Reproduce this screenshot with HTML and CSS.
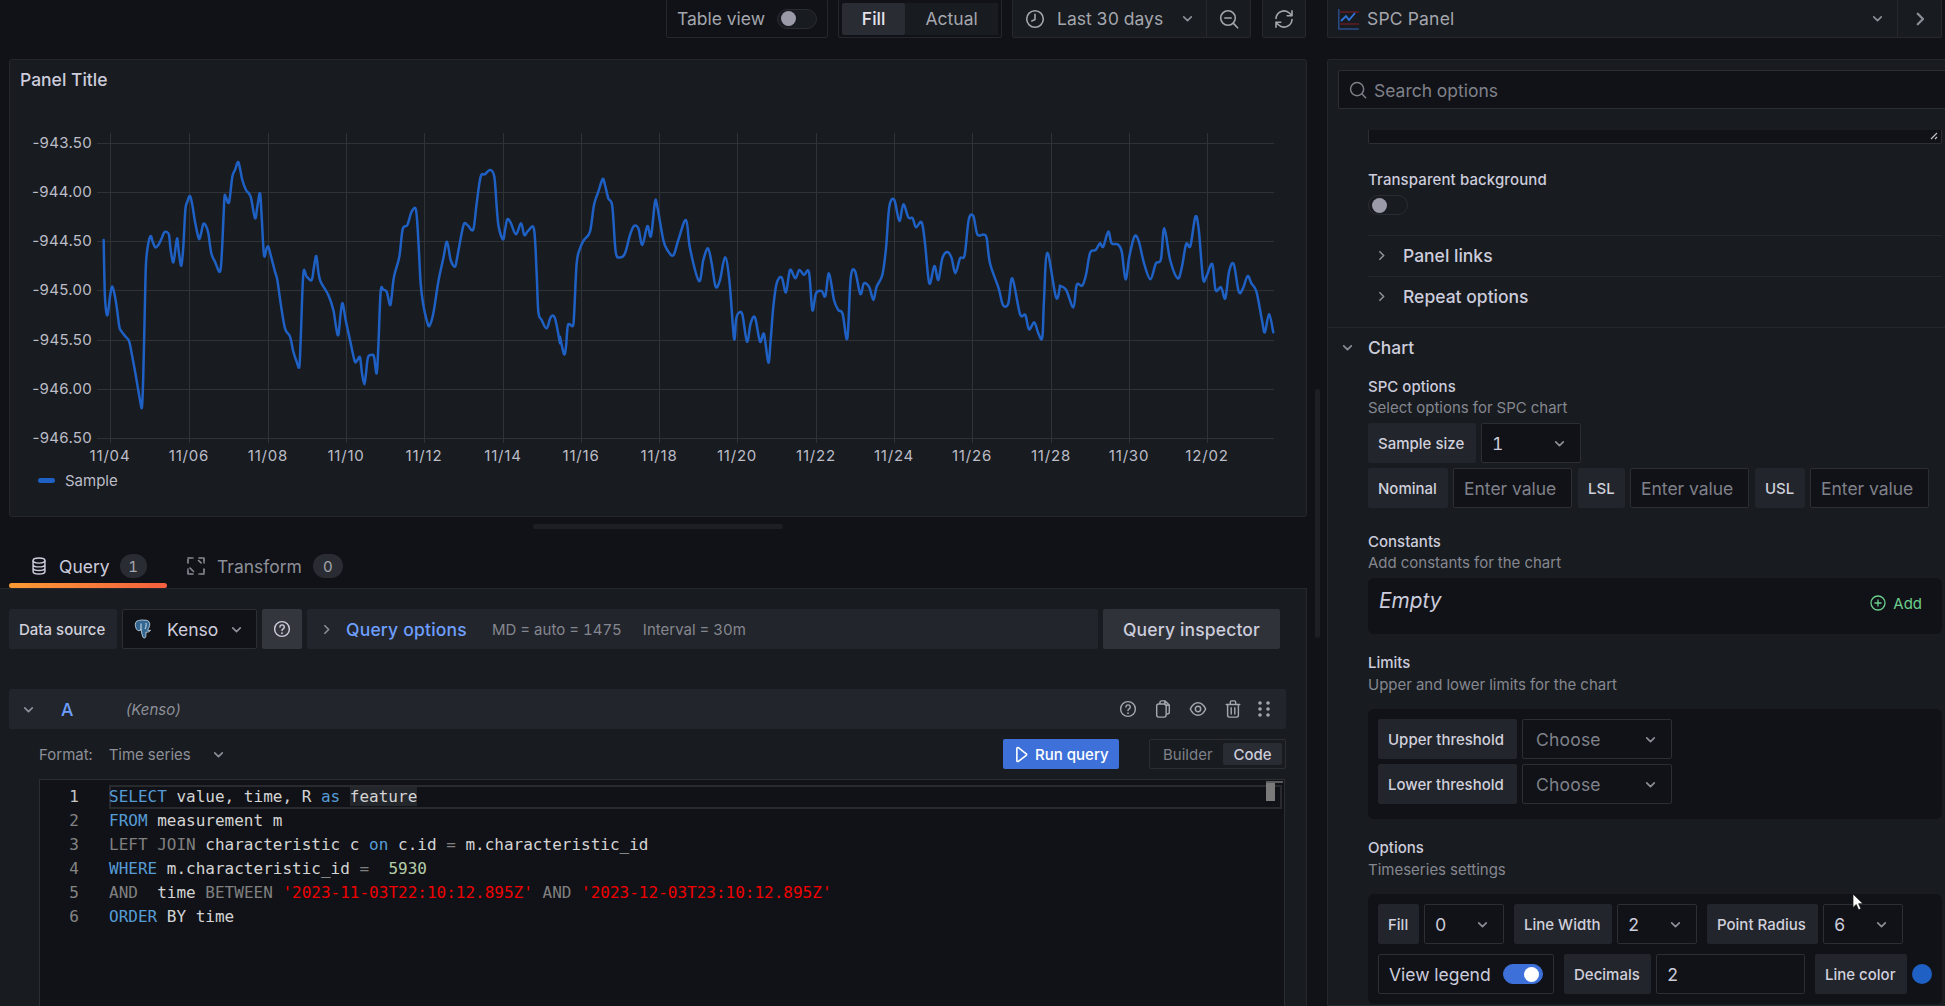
FILE: index.html
```html
<!DOCTYPE html>
<html lang="en">
<head>
<meta charset="utf-8">
<title>Edit panel</title>
<link rel="stylesheet" href="styles.css">
</head>
<body>
<svg class="defs" aria-hidden="true">
  <symbol id="chev-d" viewBox="0 0 12 12"><path d="M2.5 4.5 6 8l3.5-3.5" fill="none" stroke="currentColor" stroke-width="1.5" stroke-linecap="round" stroke-linejoin="round"/></symbol>
  <symbol id="chev-r" viewBox="0 0 12 12"><path d="M4.5 2.5 8 6l-3.5 3.5" fill="none" stroke="currentColor" stroke-width="1.5" stroke-linecap="round" stroke-linejoin="round"/></symbol>
  <symbol id="help" viewBox="0 0 20 20"><circle cx="10" cy="10" r="8.2" fill="none" stroke="currentColor" stroke-width="1.6"/><path d="M7.7 7.8a2.4 2.4 0 1 1 3.6 2.1c-.8.5-1.3 1-1.3 1.9" fill="none" stroke="currentColor" stroke-width="1.6" stroke-linecap="round"/><circle cx="10" cy="14.6" r="1" fill="currentColor"/></symbol>
</svg>

<div class="app">
  <div class="left">
    <div class="toolbar">
      <div class="tbox table-view">
        <span>Table view</span>
        <span class="toggle"><i class="knob"></i></span>
      </div>
      <div class="tbox seg">
        <span class="seg-on">Fill</span>
        <span class="seg-off">Actual</span>
      </div>
      <div class="tbox timebox">
        <div class="time-main">
          <svg class="ic20" viewBox="0 0 20 20"><circle cx="10" cy="10" r="8.3" fill="none" stroke="currentColor" stroke-width="1.6"/><path d="M10 5.2V10.6L6.8 12" fill="none" stroke="currentColor" stroke-width="1.6" stroke-linecap="round" stroke-linejoin="round"/></svg>
          <span class="time-text">Last 30 days</span>
          <svg class="ic12"><use href="#chev-d"/></svg>
        </div>
        <div class="time-zoom">
          <svg class="ic20" viewBox="0 0 20 20"><circle cx="9" cy="9" r="7.3" fill="none" stroke="currentColor" stroke-width="1.6"/><path d="M5.8 9h6.4M14.4 14.4 18.6 18.8" fill="none" stroke="currentColor" stroke-width="1.6" stroke-linecap="round"/></svg>
        </div>
      </div>
      <div class="tbox refresh">
        <svg class="ic20" viewBox="0 0 20 20"><path d="M2 9.5A8 8 0 0 1 15.6 4.3L18 6.6M18 1.8v4.9h-4.8M18 10.5A8 8 0 0 1 4.4 15.7L2 13.4M2 18.2v-4.9h4.8" fill="none" stroke="currentColor" stroke-width="1.6" stroke-linecap="round" stroke-linejoin="round"/></svg>
      </div>
    </div>

    <section class="panel">
      <h2 class="panel-title">Panel Title</h2>
      <svg class="chart" width="1296" height="340" viewBox="10 130 1296 340">
        <g class="grid">
          <path d="M97 143.5H1274M97 192.5H1274M97 241.5H1274M97 290.5H1274M97 340.5H1274M97 389.5H1274M97 438.5H1274"/>
          <path d="M110.5 133V443M189.5 133V443M268.5 133V443M346.5 133V443M424.5 133V443M503.5 133V443M581.5 133V443M659.5 133V443M737.5 133V443M816.5 133V443M894.5 133V443M972.5 133V443M1051.5 133V443M1129.5 133V443M1207.5 133V443"/>
        </g>
        <g class="ylabels">
          <text x="92" y="144">-943.50</text>
          <text x="92" y="193">-944.00</text>
          <text x="92" y="242">-944.50</text>
          <text x="92" y="291">-945.00</text>
          <text x="92" y="341">-945.50</text>
          <text x="92" y="390">-946.00</text>
          <text x="92" y="439">-946.50</text>
        </g>
        <g class="xlabels">
          <text x="110" y="457">11/04</text>
          <text x="189" y="457">11/06</text>
          <text x="268" y="457">11/08</text>
          <text x="346" y="457">11/10</text>
          <text x="424" y="457">11/12</text>
          <text x="503" y="457">11/14</text>
          <text x="581" y="457">11/16</text>
          <text x="659" y="457">11/18</text>
          <text x="737" y="457">11/20</text>
          <text x="816" y="457">11/22</text>
          <text x="894" y="457">11/24</text>
          <text x="972" y="457">11/26</text>
          <text x="1051" y="457">11/28</text>
          <text x="1129" y="457">11/30</text>
          <text x="1207" y="457">12/02</text>
        </g>
        <polyline class="series" transform="translate(60 140) scale(.33333)" points="131,300 134,450 138,510 143,524 150,470 156,440 163,460 170,500 178,560 185,575 195,588 207,603 215,640 228,710 240,780 246,800 250,700 255,480 258,370 264,315 272,288 278,305 286,322 295,315 305,295 312,278 320,276 327,285 332,330 339,367 344,345 351,295 357,340 364,377 370,320 376,210 382,185 390,168 397,195 405,245 416,295 422,285 430,252 438,258 445,280 454,340 465,365 480,395 486,330 493,180 497,170 507,187 517,110 525,90 534,66 540,85 547,120 558,150 572,170 585,235 592,200 600,160 605,230 612,345 620,325 625,320 632,345 645,395 652,420 662,490 675,565 690,590 700,635 710,665 718,680 722,600 730,402 740,410 755,420 762,380 769,348 775,395 782,425 805,465 820,510 828,560 835,585 842,520 848,490 857,540 870,600 884,663 892,660 900,652 906,700 913,733 918,700 924,652 935,645 942,650 950,700 955,620 962,455 970,450 980,455 990,495 995,470 1002,410 1018,350 1028,268 1042,255 1055,215 1068,210 1075,300 1082,430 1090,495 1100,540 1108,558 1120,520 1135,425 1150,355 1161,305 1172,360 1185,380 1192,350 1205,280 1213,250 1225,258 1240,268 1250,190 1262,110 1275,103 1290,90 1303,110 1310,200 1316,260 1329,298 1335,270 1342,238 1352,248 1368,283 1383,250 1393,285 1405,272 1422,268 1430,400 1435,515 1445,540 1460,565 1472,532 1485,535 1500,610"/>
        <polyline class="series" transform="translate(560 140) scale(.33333)" points="0,590 12,642 18,620 24,555 38,558 42,530 50,370 60,325 72,300 90,275 102,195 115,155 128,117 135,135 145,175 157,200 167,335 180,352 195,340 210,285 222,258 235,265 247,315 262,258 273,288 285,186 292,200 310,300 322,330 340,346 355,300 378,240 390,325 417,423 430,360 444,325 455,370 467,440 480,420 495,352 508,420 522,595 528,540 535,520 547,523 561,605 572,550 585,532 600,605 612,582 625,668 632,600 640,500 650,430 665,412 678,457 690,390 706,415 718,390 732,405 747,397 757,510 768,460 785,453 796,468 807,400 822,480 835,510 848,522 862,595 872,415 885,393 901,462 912,430 928,442 940,480 950,440 967,405 978,325 988,200 1003,180 1018,243 1030,193 1045,232 1058,235 1068,262 1085,247 1095,310 1108,430 1123,378 1135,420 1147,355 1162,336 1175,355 1186,400 1200,355 1214,345 1226,240 1240,228 1252,283 1270,284 1280,295 1290,370 1316,445 1329,495 1345,490 1357,415 1380,522 1396,525 1407,568 1423,547 1435,580 1447,592 1452,480 1462,338 1488,472 1500,440"/>
        <polyline class="series" transform="translate(660 0) scale(.42092 .33333)" points="950,857 965,870 982,922 990,855 1003,857 1012,825 1022,758 1035,750 1045,730 1053,740 1065,695 1073,730 1087,733 1097,755 1106,838 1115,770 1127,710 1137,722 1150,790 1165,838 1178,790 1190,778 1198,685 1212,780 1230,835 1240,800 1250,732 1260,738 1272,650 1280,690 1290,835 1298,830 1312,792 1320,870 1333,862 1343,895 1352,815 1363,792 1375,875 1385,865 1396,828 1405,850 1417,875 1430,960 1437,997 1447,942 1457,997"/>
      </svg>
      <div class="legend"><i class="legend-line"></i><span>Sample</span></div>
    </section>

    <div class="splitter"></div>

    <nav class="tabs">
      <div class="tab tab-active">
        <svg class="ic18" viewBox="0 0 16 20"><ellipse cx="8" cy="4" rx="6.6" ry="2.8" fill="none" stroke="currentColor" stroke-width="1.6"/><path d="M1.4 4v12c0 1.6 3 2.8 6.6 2.8s6.600-1.200 6.600-2.800V4M1.400 8.200c0 1.600 3 2.800 6.600 2.800s6.600-1.200 6.600-2.800M1.400 12.200c0 1.600 3 2.800 6.600 2.800s6.600-1.200 6.600-2.800" fill="none" stroke="currentColor" stroke-width="1.6"/></svg>
        <span>Query</span><b class="badge">1</b>
      </div>
      <div class="tab tab-idle">
        <svg class="ic18" viewBox="0 0 18 18"><path d="M1 6V1h5M17 12v5h-5M12 1h5v5M6 17H1v-5M11.500 3.500l3.500 3M3 11l3.500 3.500" fill="none" stroke="currentColor" stroke-width="1.6" stroke-linecap="round" stroke-linejoin="round" stroke-dasharray="3.500 1.400"/></svg>
        <span>Transform</span><b class="badge badge-wide">0</b>
      </div>
    </nav>

    <section class="query">
      <div class="ds-row">
        <span class="flabel ds-label">Data source</span>
        <div class="select ds-select">
          <svg class="elephant" viewBox="0 0 20 20"><path d="M4.500 1.500C1.800 1.800.8 4.600 1.500 7.500c.5 2.300 1.600 4.200 3.200 4.200 1 0 1.700-.6 2.300-1.300.4 2.500.9 5 1.800 7.500.6 1.500 2.600 1.500 2.900-.2.300-1.500.2-3 .3-4.500 1.800.2 3.800-.6 4.600-1.900-1.200.4-2.300.3-3-.2 1.300-1.800 2.300-4.200 2.100-6.500C15.400 1.600 12.600.8 10 1.200 8.200.6 6.200 1.300 4.500 1.500Z" fill="#336791" stroke="#cfe0ee" stroke-width=".8"/><path d="M7 4.500v7M12 4c.5 2-.2 4.500-1 6" fill="none" stroke="#e6eef5" stroke-width=".9"/></svg>
          <span class="ds-name">Kenso</span>
          <svg class="ic12"><use href="#chev-d"/></svg>
        </div>
        <div class="ds-help"><svg class="ic18"><use href="#help"/></svg></div>
        <div class="qopts">
          <svg class="ic12"><use href="#chev-r"/></svg>
          <span class="qopts-title">Query options</span>
          <span class="qopts-info">MD = auto = 1475</span>
          <span class="qopts-info">Interval = 30m</span>
        </div>
        <div class="inspector">Query inspector</div>
      </div>

      <div class="qhead">
        <svg class="ic12 qhead-chev"><use href="#chev-d"/></svg>
        <span class="qhead-a">A</span>
        <span class="qhead-ds">(Kenso)</span>
        <div class="qhead-icons">
          <svg class="ic18"><use href="#help"/></svg>
          <svg class="ic18" viewBox="0 0 18 20"><path d="M5.500 4.500V3.200C5.500 2 6.500 1 7.700 1h3.600L16 5.700v7.600c0 1.200-1 2.200-2.200 2.200h-1.300M11 1v3c0 1 .8 1.800 1.800 1.800H16" fill="none" stroke="currentColor" stroke-width="1.600" stroke-linejoin="round"/><rect x="2" y="4.500" width="10.500" height="14.500" rx="2.200" fill="none" stroke="currentColor" stroke-width="1.600"/></svg>
          <svg class="ic18" viewBox="0 0 20 20"><path d="M1.500 10C3.500 5.500 6.500 3 10 3s6.500 2.500 8.500 7c-2 4.500-5 7-8.500 7s-6.500-2.500-8.500-7Z" fill="none" stroke="currentColor" stroke-width="1.700"/><circle cx="10" cy="10" r="3" fill="none" stroke="currentColor" stroke-width="1.700"/></svg>
          <svg class="ic18" viewBox="0 0 18 20"><path d="M1.500 5h15M6 5V2.500C6 1.700 6.700 1 7.500 1h3c.8 0 1.500.7 1.500 1.500V5M3 5v12c0 1.100.9 2 2 2h8c1.100 0 2-.9 2-2V5M7 8.500v7M11 8.500v7" fill="none" stroke="currentColor" stroke-width="1.600" stroke-linecap="round"/></svg>
          <svg class="ic18 drag" viewBox="0 0 14 18" fill="currentColor"><circle cx="3" cy="3" r="1.800"/><circle cx="11" cy="3" r="1.800"/><circle cx="3" cy="9" r="1.800"/><circle cx="11" cy="9" r="1.800"/><circle cx="3" cy="15" r="1.800"/><circle cx="11" cy="15" r="1.800"/></svg>
        </div>
      </div>

      <div class="format-row">
        <span class="fmt-label">Format:</span>
        <span class="fmt-value">Time series</span>
        <svg class="ic12 fmt-chev"><use href="#chev-d"/></svg>
        <div class="run">
          <svg class="run-ic" viewBox="0 0 14 18"><path d="M2 2.500c0-.8.900-1.300 1.600-.8l8.500 6.500c.6.400.6 1.300 0 1.700l-8.500 6.500c-.7.500-1.600 0-1.600-.8Z" fill="none" stroke="currentColor" stroke-width="1.700" stroke-linejoin="round"/></svg>
          <span>Run query</span>
        </div>
        <div class="mode">
          <span class="mode-off">Builder</span>
          <span class="mode-on">Code</span>
        </div>
      </div>

      <div class="editor">
        <div class="mm-top"></div>
        <div class="mm-mark"></div>
        <div class="ln ln-cur"><span class="no">1</span><code class="cd"><span class="k">SELECT</span> value, time, R <span class="k">as</span> <span class="sel">feature</span></code></div>
        <div class="ln"><span class="no">2</span><code class="cd"><span class="k">FROM</span> measurement m</code></div>
        <div class="ln"><span class="no">3</span><code class="cd"><span class="g">LEFT JOIN</span> characteristic c <span class="k">on</span> c.id <span class="g">=</span> m.characteristic_id</code></div>
        <div class="ln"><span class="no">4</span><code class="cd"><span class="k">WHERE</span> m.characteristic_id <span class="g">=</span>  <span class="n">5930</span></code></div>
        <div class="ln"><span class="no">5</span><code class="cd"><span class="g">AND</span>  time <span class="g">BETWEEN</span> <span class="s">'2023-11-03T22:10:12.895Z'</span> <span class="g">AND</span> <span class="s">'2023-12-03T23:10:12.895Z'</span></code></div>
        <div class="ln"><span class="no">6</span><code class="cd"><span class="k">ORDER</span> BY time</code></div>
      </div>
    </section>
  </div>

  <div class="gutter"><div class="gutter-thumb"></div></div>

  <div class="right">
    <div class="picker">
      <div class="picker-main">
        <svg class="spc-ic" viewBox="0 0 21 22"><path d="M.8 1v20h20" fill="none" stroke="#2a4f8f" stroke-width="1.400"/><path d="M2 4h19M2 16h19" stroke="#8a1f25" stroke-width="1.200"/><path d="M3 13 8 8l3 4 6-7" fill="none" stroke="#2f74dc" stroke-width="1.800"/></svg>
        <span class="picker-name">SPC Panel</span>
        <svg class="ic12 picker-chev"><use href="#chev-d"/></svg>
      </div>
      <div class="picker-next"><svg class="ic14"><use href="#chev-r"/></svg></div>
    </div>

    <div class="options">
      <div class="search">
        <svg class="ic18" viewBox="0 0 20 20"><circle cx="9" cy="9" r="7.300" fill="none" stroke="currentColor" stroke-width="1.600"/><path d="m14.500 14.500 4 4" stroke="currentColor" stroke-width="1.600" stroke-linecap="round"/></svg>
        <span>Search options</span>
      </div>

      <div class="group group-first">
        <div class="ta-end"><svg class="ta-grip" viewBox="0 0 8 8"><path d="M1 7 7 1M5 7l2-2" stroke="#c0c1c8" stroke-width="1.200"/></svg></div>
        <div class="title title-tb">Transparent background</div>
        <div class="toggle toggle-tb"><i class="knob"></i></div>
        <div class="sub-head"><svg class="ic12"><use href="#chev-r"/></svg><span>Panel links</span></div>
        <div class="sub-head"><svg class="ic12"><use href="#chev-r"/></svg><span>Repeat options</span></div>
      </div>

      <div class="group-chart">
        <div class="chart-head"><svg class="ic12"><use href="#chev-d"/></svg><span>Chart</span></div>

        <div class="title title-spc">SPC options</div>
        <div class="desc">Select options for SPC chart</div>
        <div class="form-stack">
          <div class="pairs">
            <span class="flabel w108">Sample size</span>
            <div class="select w100"><span class="val">1</span><svg class="ic12"><use href="#chev-d"/></svg></div>
          </div>
          <div class="pairs pairs-spc">
            <div class="pairs"><span class="flabel w80">Nominal</span><div class="input w119 ph">Enter value</div></div>
            <div class="pairs"><span class="flabel w47">LSL</span><div class="input w119 ph">Enter value</div></div>
            <div class="pairs"><span class="flabel w50">USL</span><div class="input w119 ph">Enter value</div></div>
          </div>
        </div>

        <div class="title title-next">Constants</div>
        <div class="desc">Add constants for the chart</div>
        <div class="box box-const">
          <em class="empty">Empty</em>
          <div class="add">
            <svg class="ic16" viewBox="0 0 16 16"><circle cx="8" cy="8" r="7" fill="none" stroke="currentColor" stroke-width="1.300"/><path d="M8 4.500v7M4.500 8h7" stroke="currentColor" stroke-width="1.300"/></svg>
            <span>Add</span>
          </div>
        </div>

        <div class="title title-next2">Limits</div>
        <div class="desc desc-low">Upper and lower limits for the chart</div>
        <div class="box box-form">
          <div class="form-stack">
            <div class="pairs"><span class="flabel w139">Upper threshold</span><div class="select w150"><span class="ph choose">Choose</span><svg class="ic12"><use href="#chev-d"/></svg></div></div>
            <div class="pairs"><span class="flabel w139">Lower threshold</span><div class="select w150"><span class="ph choose">Choose</span><svg class="ic12"><use href="#chev-d"/></svg></div></div>
          </div>
        </div>

        <div class="title title-next2">Options</div>
        <div class="desc desc-low">Timeseries settings</div>
        <div class="box box-form box-opts">
          <div class="form-stack form-stack-10">
            <div class="pairs pairs-10">
              <div class="pairs"><span class="flabel w41">Fill</span><div class="select w80"><span class="val">0</span><svg class="ic12"><use href="#chev-d"/></svg></div></div>
              <div class="pairs"><span class="flabel w98">Line Width</span><div class="select w80"><span class="val">2</span><svg class="ic12"><use href="#chev-d"/></svg></div></div>
              <div class="pairs"><span class="flabel w111">Point Radius</span><div class="select w80"><span class="val">6</span><svg class="ic12"><use href="#chev-d"/></svg></div></div>
            </div>
            <div class="pairs pairs-10">
              <div class="input view-legend w176"><span class="val">View legend</span><span class="toggle toggle-on"><i class="knob"></i></span></div>
              <div class="pairs"><span class="flabel w87">Decimals</span><div class="input w149 val">2</div></div>
              <div class="pairs pairs-color"><span class="flabel w92">Line color</span><i class="swatch"></i></div>
            </div>
          </div>
        </div>
      </div>
      <svg class="cursor" viewBox="0 0 12 18"><path d="M1 1v13.500l3.300-3 2.300 5.300 2.300-1-2.300-5.100H11Z" fill="#fff" stroke="#111" stroke-width=".7"/></svg>
    </div>
  </div>
</div>
<script src="chart.js"></script>
</body>
</html>
```

FILE: styles.css
```css
* { box-sizing: border-box; }
html, body { margin: 0; height: 100%; }
body {
  background: #111217;
  color: #ccccdc;
  font-family: Inter, "Noto Sans", sans-serif;
  font-size: 15px;
  font-variant-numeric: tabular-nums;
  overflow: hidden;
}
.defs { position: absolute; width: 0; height: 0; }
svg { display: block; flex: none; }
h2 { margin: 0; font: inherit; }

.ic12 { width: 13px; height: 13px; color: #8d8f98; }
.ic14 { width: 18px; height: 18px; color: #8d8f98; }
.ic16 { width: 16px; height: 16px; }
.ic18 { width: 18px; height: 18px; }
.ic20 { width: 20px; height: 20px; color: #a4a6ae; }

.app { display: flex; width: 1945px; height: 1006px; overflow: hidden; }
.left { width: 1307px; flex: none; display: flex; flex-direction: column; }
.gutter { width: 20px; flex: none; padding: 389px 0 0 8px; }
.gutter-thumb { width: 5px; height: 249px; background: #1d1f24; border-radius: 3px; }
.right { flex: 1; min-width: 0; display: flex; flex-direction: column; }

/* toolbar */
.toolbar {
  display: flex;
  justify-content: flex-end;
  height: 39px;
  margin-top: -1px;
  margin-bottom: 21px;
  padding-right: 1px;
  gap: 10px;
}
.tbox {
  display: flex;
  align-items: center;
  height: 39px;
  border: 1px solid #25272d;
  border-radius: 2px;
  background: #181b1f;
  font-size: 17.5px;
  color: #a4a6ae;
}
.table-view {
  width: 162px;
  padding: 0 10px;
  justify-content: space-between;
  background: #111217;
}
.toggle {
  display: flex;
  align-items: center;
  width: 40px;
  height: 20px;
  padding-left: 3px;
  border: 1px solid #2a2c33;
  border-radius: 10px;
  background: #181b1f;
}
.knob { display: block; width: 15px; height: 15px; border-radius: 50%; background: #9a9aa8; }
.seg { width: 164px; padding: 3px; background: #111217; }
.seg span { display: flex; align-items: center; justify-content: center; height: 32px; }
.seg-on { width: 64px; background: #2a2c33; color: #e3e3ec; font-weight: 500; border-radius: 2px; }
.seg-off { width: 94px; background: #181b1f; }
.timebox { width: 239px; margin-right: 1px; }
.time-main { display: flex; align-items: center; flex: 1; height: 100%; padding: 0 12px; border-right: 1px solid #25272d; }
.time-text { margin-left: 12px; flex: 1; }
.time-zoom { display: flex; align-items: center; justify-content: center; width: 43px; }
.refresh { width: 44px; justify-content: center; }

/* panel */
.panel {
  height: 458px;
  margin-left: 9px;
  background: #181b1f;
  border: 1px solid #25272d;
  border-radius: 3px;
}
.panel-title { height: 40px; padding-left: 10px; line-height: 40px; font-size: 17.5px; font-weight: 500; color: #ccccdc; }
.chart { margin-top: 30px; }
.grid path { stroke: #2f3237; stroke-width: 1; fill: none; }
.ylabels text { font-size: 15px; font-variant-numeric: normal; letter-spacing: .3px; fill: #bcbdc8; text-anchor: end; dominant-baseline: middle; }
.xlabels text { font-size: 15px; font-variant-numeric: normal; letter-spacing: .8px; fill: #bcbdc8; text-anchor: middle; dominant-baseline: middle; }
.series {
  fill: none;
  stroke: #1f60c4;
  stroke-width: 2.5;
  stroke-linejoin: round;
  stroke-linecap: round;
  vector-effect: non-scaling-stroke;
}
.legend { display: flex; align-items: center; height: 22px; padding: 0 0 2px 28px; color: #bcbdc8; }
.legend-line { width: 17px; height: 5px; margin-right: 10px; border-radius: 3px; background: #1f60c4; }

.splitter { width: 250px; height: 5px; margin: 7px 0 0 533px; border-radius: 3px; background: #1d1f24; }

/* tabs */
.tabs { display: flex; height: 42px; margin-top: 17px; margin-left: 9px; }
.tab { display: flex; align-items: center; height: 42px; font-size: 17.5px; }
.tab-active {
  position: relative;
  width: 158px;
  padding: 0 0 2px 21px;
  gap: 11px;
  color: #ccccdc;
}
.tab-active::after {
  content: "";
  position: absolute;
  left: 0;
  right: 0;
  bottom: 0;
  height: 5px;
  border-radius: 3px;
  background: linear-gradient(90deg, #f99b34, #f55f3e);
}
.tab-active .ic18 { color: #ccccdc; }
.tab-idle { margin-left: 20px; gap: 12px; color: #8d8f98; padding-bottom: 2px; }
.badge {
  display: flex;
  align-items: center;
  justify-content: center;
  width: 27px;
  height: 24px;
  margin-left: -1px;
  border-radius: 12px;
  background: #2a2c33;
  color: #a4a6ae;
  font-size: 15px;
  font-weight: 400;
}
.badge-wide { width: 30px; }

/* query */
.query {
  flex: 1;
  min-height: 0;
  padding: 20px 0 0 9px;
  background: #181b1f;
  border-top: 1px solid #25272d;
  border-right: 1px solid #25272d;
}
.ds-row { display: flex; height: 40px; gap: 5px; }
.flabel {
  display: flex;
  align-items: center;
  height: 40px;
  flex: none;
  padding-left: 10px;
  background: #22252b;
  border-radius: 2px;
  font-size: 15px;
  font-weight: 500;
  color: #d0d0dc;
}
.ds-label { width: 108px; }
.select, .input {
  display: flex;
  align-items: center;
  height: 40px;
  flex: none;
  padding: 0 14px 0 10px;
  background: #111217;
  border: 1px solid #2c2e34;
  border-radius: 2px;
  font-size: 17.5px;
}
.select { justify-content: space-between; }
.choose { margin-left: 3px; letter-spacing: .2px; }
.ds-select { width: 135px; padding: 0 13px 0 11px; }
.elephant { width: 20px; height: 20px; }
.ds-name { margin-left: 13px; margin-right: auto; color: #ccccdc; }
.ds-help { display: flex; align-items: center; justify-content: center; width: 40px; background: #34363d; border-radius: 2px; color: #ccccdc; }
.qopts {
  display: flex;
  align-items: center;
  width: 791px;
  padding-left: 13px;
  background: #22252b;
  border-radius: 2px;
}
.qopts-title { margin-left: 13px; margin-right: 25px; font-size: 17.5px; font-weight: 500; letter-spacing: .2px; color: #6e9fff; }
.qopts-info { margin-right: 21px; color: #858790; }
.inspector {
  display: flex;
  align-items: center;
  justify-content: center;
  width: 177px;
  background: #2f3238;
  border-radius: 2px;
  font-size: 17.5px;
  font-weight: 500;
  letter-spacing: .15px;
  color: #ccccdc;
}

.qhead {
  display: flex;
  align-items: center;
  width: 1277px;
  height: 40px;
  margin-top: 40px;
  background: #22252b;
  border-radius: 2px;
}
.qhead-chev { margin-left: 13px; }
.qhead-a { margin-left: 26px; font-size: 17.5px; font-weight: 500; color: #6e9fff; }
.qhead-ds { margin-left: 52px; font-style: italic; color: #8d8f98; }
.qhead-icons { display: flex; align-items: center; gap: 17px; margin-left: auto; margin-right: 13px; color: #a4a6ae; }
.drag { margin-left: -4px; }

.format-row {
  display: flex;
  align-items: center;
  width: 1277px;
  height: 30px;
  margin-top: 10px;
  color: #8d8f98;
}
.fmt-label { margin-left: 30px; }
.fmt-value { margin-left: 16px; }
.fmt-chev { margin-left: 21px; }
.run {
  display: flex;
  align-items: center;
  gap: 7px;
  width: 116px;
  height: 30px;
  margin-left: auto;
  padding-left: 12px;
  background: #3d71d9;
  border-radius: 2px;
  color: #fff;
  font-weight: 500;
}
.run-ic { width: 13px; height: 17px; }
.mode {
  display: flex;
  align-items: center;
  width: 137px;
  height: 30px;
  margin-left: 30px;
  padding: 0 3px 0 13px;
  border: 1px solid #2c2e34;
  border-radius: 2px;
  justify-content: space-between;
  color: #7f818a;
}
.mode-on {
  display: flex;
  align-items: center;
  justify-content: center;
  width: 59px;
  height: 22px;
  background: #2a2c33;
  border-radius: 2px;
  color: #ccccdc;
  font-weight: 500;
}

.editor {
  position: relative;
  width: 1246px;
  height: 240px;
  margin: 10px 0 0 30px;
  padding-top: 5px;
  background: #111217;
  border: 1px solid #2c2e34;
  border-bottom: 0;
  font-family: "DejaVu Sans Mono", "Liberation Mono", monospace;
  font-size: 16px;
  color: #d4d4d4;
}
.ln { display: flex; height: 24px; line-height: 23px; white-space: pre; }
.no { width: 39px; flex: none; text-align: right; color: #858585; }
.cd { flex: 1; margin-left: 30px; margin-right: 2px; font: inherit; }
.ln-cur .no { color: #c6c6c6; }
.ln-cur .cd { box-shadow: inset 0 0 0 2px #282a2e; }
.k { color: #569cd6; }
.g { color: #808080; }
.n { color: #b5cea8; }
.s { color: #f00000; }
.sel { background: #23262b; }
.mm-top { position: absolute; top: 1px; right: 1px; width: 17px; height: 2px; background: #5a5b5e; }
.mm-mark { position: absolute; top: 3px; right: 9px; width: 9px; height: 18px; background: #7a7a7a; z-index: 1; }

/* right */
.picker {
  display: flex;
  width: 615px;
  height: 39px;
  margin-top: -1px;
  margin-bottom: 21px;
  background: #181b1f;
  border: 1px solid #25272d;
  border-radius: 2px;
}
.picker-main { display: flex; align-items: center; flex: 1; padding-left: 10px; border-right: 1px solid #25272d; }
.spc-ic { width: 21px; height: 22px; }
.picker-name { margin-left: 8px; font-size: 17.5px; letter-spacing: .2px; color: #a4a6ae; }
.picker-chev { margin-left: auto; margin-right: 13px; }
.picker-next { display: flex; align-items: center; justify-content: center; width: 43px; }

.options {
  position: relative;
  flex: 1;
  min-height: 0;
  width: 640px;
  padding-top: 10px;
  background: #181b1f;
  border: 1px solid #25272d;
  border-radius: 3px 0 0 0;
}
.search {
  display: flex;
  align-items: center;
  gap: 7px;
  height: 39px;
  margin-left: 10px;
  padding: 1px 0 0 10px;
  background: #111217;
  border: 1px solid #2c2e34;
  border-radius: 2px;
  font-size: 17.5px;
  color: #7f818a;
}
.group { padding: 0 0 10px 40px; border-bottom: 1px solid #25272d; width: 640px; }
.group-first { margin-top: 21px; }
.ta-end {
  display: flex;
  align-items: flex-end;
  justify-content: flex-end;
  width: 574px;
  height: 14px;
  padding: 0 3px 3px 0;
  background: #111217;
  border: 1px solid #2c2e34;
  border-top: 0;
  border-radius: 0 0 2px 2px;
}
.ta-grip { width: 8px; height: 8px; }
.title { height: 22px; line-height: 22px; font-size: 15px; font-weight: 500; color: #ccccdc; }
.title-tb { margin-top: 25px; letter-spacing: .1px; }
.toggle-tb { margin-top: 4px; margin-bottom: 20px; }
.sub-head {
  display: flex;
  align-items: center;
  width: 574px;
  height: 41px;
  padding: 0 0 2px 7px;
  border-top: 1px solid #25272d;
  font-size: 17.5px;
  font-weight: 500;
  color: #ccccdc;
  gap: 15px;
}
.group-chart { padding-left: 40px; width: 615px; }
.chart-head {
  display: flex;
  align-items: center;
  height: 40px;
  margin-left: -27px;
  padding-bottom: 2px;
  gap: 14px;
  font-size: 17.5px;
  font-weight: 500;
  color: #ccccdc;
}
.title-spc { margin-top: 8px; }
.title-next { margin-top: 23px; }
.title-next2 { margin-top: 18px; }
.desc { height: 20px; line-height: 20px; font-size: 15px; color: #858790; }
.desc-low { margin-top: 1px; }
.form-stack { display: flex; flex-direction: column; gap: 5px; margin-top: 5px; }
.pairs { display: flex; gap: 5px; }
.pairs-spc { gap: 6px; }
.pairs-10 { gap: 10px; }
.pairs-color { align-items: center; }
.form-stack-10 { gap: 10px; margin-top: 0; }
.val { color: #ccccdc; }
.ph { color: #7f818a; }
.w41 { width: 41px; }
.w47 { width: 47px; }
.w50 { width: 50px; }
.w80 { width: 80px; }
.w87 { width: 87px; }
.w92 { width: 92px; }
.w98 { width: 98px; }
.w100 { width: 100px; }
.w108 { width: 108px; }
.w111 { width: 111px; }
.w119 { width: 119px; }
.w139 { width: 139px; }
.w149 { width: 149px; }
.w150 { width: 150px; }
.w176 { width: 176px; }
.box { width: 574px; margin-top: 5px; background: #111217; border-radius: 6px; }
.box-const { display: flex; height: 56px; padding: 10px 20px 0 11px; margin-top: 5px; }
.empty { font-size: 20.8px; line-height: 26px; color: #ccccdc; }
.add { display: flex; align-items: center; gap: 7px; height: 30px; margin-left: auto; color: #6ccf8e; }
.box-form { margin-top: 14px; padding: 10px 10px 15px; }
.box-form .form-stack { margin-top: 0; }
.box-opts { padding-bottom: 10px; }
.box-opts .form-stack-10 { gap: 10px; }
.view-legend { justify-content: space-between; padding-right: 10px; }
.toggle-on { justify-content: flex-end; padding: 0 3px 0 0; background: #3d71d9; border-color: #3d71d9; }
.toggle-on .knob { background: #fff; }
.swatch { display: block; width: 20px; height: 20px; border-radius: 50%; background: #1f60c4; }
.cursor { position: absolute; left: 524px; top: 833px; width: 12px; height: 18px; }
```

FILE: chart.js
```js
// Draws each traced series as a smooth spline, as the charting library does.
document.querySelectorAll("polyline.series").forEach(function (line) {
  var pts = line.getAttribute("points").trim().split(/\s+/).map(function (p) {
    return p.split(",").map(Number);
  });
  var d = "M" + pts[0].join(" ");
  for (var i = 0; i < pts.length - 1; i++) {
    var p0 = pts[Math.max(i - 1, 0)];
    var p1 = pts[i];
    var p2 = pts[i + 1];
    var p3 = pts[Math.min(i + 2, pts.length - 1)];
    d += "C" + (p1[0] + (p2[0] - p0[0]) / 6) + " " + (p1[1] + (p2[1] - p0[1]) / 6) +
         " " + (p2[0] - (p3[0] - p1[0]) / 6) + " " + (p2[1] - (p3[1] - p1[1]) / 6) +
         " " + p2[0] + " " + p2[1];
  }
  var path = document.createElementNS("http://www.w3.org/2000/svg", "path");
  path.setAttribute("class", "series");
  path.setAttribute("transform", line.getAttribute("transform"));
  path.setAttribute("d", d);
  line.replaceWith(path);
});
```
